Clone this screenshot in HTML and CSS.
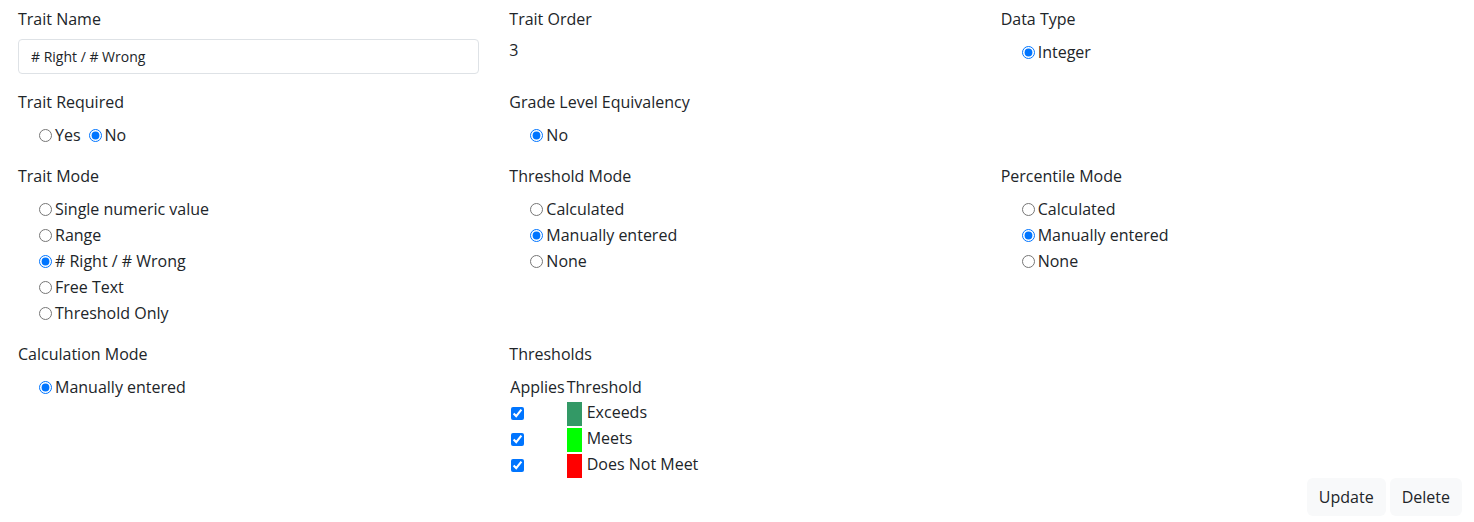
FILE: index.html
```
<!DOCTYPE html>
<html lang="en">
<head>
    <meta charset="UTF-8">
    <title>Trait</title>
    <link rel="stylesheet" href="styles.css">
</head>
<body>

<div class="trait-form">
    <div class="field">
        <label class="field-label" for="traitName">Trait Name</label>
        <input type="text" id="traitName" class="text-input" value="# Right / # Wrong">
    </div>
    <div class="field">
        <div class="field-label">Trait Order</div>
        <div class="field-value">3</div>
    </div>
    <div class="field">
        <div class="field-label">Data Type</div>
        <div class="options">
            <label class="option"><input type="radio" name="dataType" checked>Integer</label>
        </div>
    </div>

    <div class="field">
        <div class="field-label">Trait Required</div>
        <div class="options">
            <label class="option inline"><input type="radio" name="required">Yes</label><label class="option inline spaced"><input type="radio" name="required" checked>No</label>
        </div>
    </div>
    <div class="field">
        <div class="field-label">Grade Level Equivalency</div>
        <div class="options">
            <label class="option"><input type="radio" name="gle" checked>No</label>
        </div>
    </div>
    <div class="field"></div>

    <div class="field">
        <div class="field-label">Trait Mode</div>
        <div class="options">
            <label class="option"><input type="radio" name="mode">Single numeric value</label>
            <label class="option"><input type="radio" name="mode">Range</label>
            <label class="option"><input type="radio" name="mode" checked># Right / # Wrong</label>
            <label class="option"><input type="radio" name="mode">Free Text</label>
            <label class="option"><input type="radio" name="mode">Threshold Only</label>
        </div>
    </div>
    <div class="field">
        <div class="field-label">Threshold Mode</div>
        <div class="options">
            <label class="option"><input type="radio" name="thMode">Calculated</label>
            <label class="option"><input type="radio" name="thMode" checked>Manually entered</label>
            <label class="option"><input type="radio" name="thMode">None</label>
        </div>
    </div>
    <div class="field">
        <div class="field-label">Percentile Mode</div>
        <div class="options">
            <label class="option"><input type="radio" name="pcMode">Calculated</label>
            <label class="option"><input type="radio" name="pcMode" checked>Manually entered</label>
            <label class="option"><input type="radio" name="pcMode">None</label>
        </div>
    </div>

    <div class="field">
        <div class="field-label">Calculation Mode</div>
        <div class="options">
            <label class="option"><input type="radio" name="calcMode" checked>Manually entered</label>
        </div>
    </div>
    <div class="field">
        <div class="field-label">Thresholds</div>
        <table class="thresholds">
            <tr>
                <th class="applies-col">Applies</th>
                <th>Threshold</th>
            </tr>
            <tr>
                <td><input type="checkbox" checked></td>
                <td><span class="swatch exceeds"></span>Exceeds</td>
            </tr>
            <tr>
                <td><input type="checkbox" checked></td>
                <td><span class="swatch meets"></span>Meets</td>
            </tr>
            <tr>
                <td><input type="checkbox" checked></td>
                <td><span class="swatch not-meet"></span>Does Not Meet</td>
            </tr>
        </table>
    </div>
    <div class="field"></div>
</div>

<div class="actions">
    <button type="button" class="btn">Update</button>
    <button type="button" class="btn">Delete</button>
</div>

</body>
</html>
```

FILE: styles.css
```
body {
    font-family: "Open Sans", "Noto Sans", sans-serif;
    font-size: 16px;
    line-height: 24px;
    color: #212529;
    background-color: #fff;
    margin: 0;
}

.trait-form {
    display: grid;
    grid-template-columns: repeat(3, 1fr);
    column-gap: 30px;
    row-gap: 16px;
    padding: 7px 12px 0 18px;
}

.field-label {
    display: block;
    margin-bottom: 8px;
}

.text-input {
    box-sizing: border-box;
    width: 100%;
    height: 35px;
    padding: 0 12px;
    font-family: inherit;
    font-size: 14px;
    color: #212529;
    border: 1px solid #dee2e6;
    border-radius: 4px;
}

.field-value {
    line-height: 26px;
    margin-top: -2px;
}

.options {
    padding-left: 16px;
}

.option {
    display: block;
    line-height: 26px;
}

.option.inline {
    display: inline;
}

.option.spaced {
    margin-left: 3px;
}

.option input {
    margin: 0 3px 0 5px;
    vertical-align: -1px;
}

.thresholds {
    border-collapse: collapse;
    margin-left: 1px;
}

.thresholds th {
    font-weight: normal;
    text-align: left;
    padding: 0;
    line-height: 26px;
}

.thresholds .applies-col {
    padding-right: 2px;
}

.thresholds td {
    padding: 0;
    height: 26px;
}

.thresholds td input {
    margin: 0 0 0 1px;
    vertical-align: -1px;
}

.swatch {
    display: inline-block;
    width: 15px;
    height: 24px;
    margin-right: 5px;
    vertical-align: middle;
}

.exceeds { background-color: #339966; }
.meets { background-color: #00ff00; }
.not-meet { background-color: #ff0000; }

.actions {
    display: flex;
    justify-content: flex-end;
    gap: 4px;
    padding-right: 12px;
}

.btn {
    font-family: inherit;
    font-size: 16px;
    color: #212529;
    background-color: #f8f9fa;
    border: none;
    border-radius: 6px;
    height: 38px;
    padding: 0 12px;
    cursor: pointer;
}
```
